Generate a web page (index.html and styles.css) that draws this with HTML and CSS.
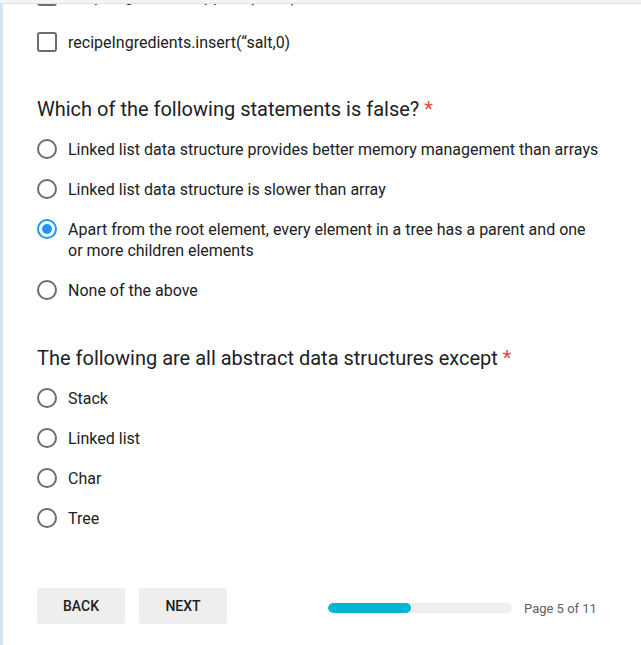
FILE: index.html
```html
<!DOCTYPE html>
<html lang="en">
<head>
<meta charset="utf-8">
<title>Quiz</title>
<link rel="stylesheet" href="styles.css">
</head>
<body>
<div class="topbar"></div>
<div class="frame">
  <div class="strip"></div>
  <main class="content">
    <section class="question">
      <ul class="options options--check">
        <li class="opt opt--clipped"><span class="checkbox"></span><span class="label">recipeIngredients.append(“salt”)</span></li>
        <li class="opt"><span class="checkbox"></span><span class="label">recipeIngredients.insert(“salt,0)</span></li>
      </ul>
    </section>

    <section class="question question--q2">
      <h2 class="title">Which of the following statements is false? <span class="req">*</span></h2>
      <ul class="options">
        <li class="opt"><span class="radio"></span><span class="label">Linked list data structure provides better memory management than arrays</span></li>
        <li class="opt"><span class="radio"></span><span class="label">Linked list data structure is slower than array</span></li>
        <li class="opt"><span class="radio radio--on"></span><span class="label">Apart from the root element, every element in a tree has a parent and one or more children elements</span></li>
        <li class="opt"><span class="radio"></span><span class="label">None of the above</span></li>
      </ul>
    </section>

    <section class="question question--q3">
      <h2 class="title">The following are all abstract data structures except <span class="req">*</span></h2>
      <ul class="options">
        <li class="opt"><span class="radio"></span><span class="label">Stack</span></li>
        <li class="opt"><span class="radio"></span><span class="label">Linked list</span></li>
        <li class="opt"><span class="radio"></span><span class="label">Char</span></li>
        <li class="opt"><span class="radio"></span><span class="label">Tree</span></li>
      </ul>
    </section>

    <footer class="footer">
      <button class="btn">BACK</button>
      <button class="btn">NEXT</button>
      <div class="progress">
        <div class="track"><div class="fill" style="width:45%"></div></div>
        <span class="pageinfo">Page 5 of 11</span>
      </div>
    </footer>
  </main>
</div>
</body>
</html>
```

FILE: styles.css
```css
* { box-sizing: border-box; }
html, body {
  margin: 0;
  padding: 0;
  background: #ffffff;
  font-family: Roboto, "Liberation Sans", Arial, sans-serif;
  color: #212121;
}
body {
  height: 645px;
  overflow: hidden;
  display: flex;
  flex-direction: column;
}
.topbar {
  height: 4px;
  background: #f4f4f4;
  border-bottom: 1px solid #e2e2e2;
  flex: none;
  position: relative;
  z-index: 2;
}
.frame {
  flex: 1;
  display: flex;
  overflow: hidden;
}
.strip {
  width: 3px;
  flex: none;
  background: #d3e5f0;
}
.content {
  flex: 1;
  padding-left: 34px;
  overflow: hidden;
}
.question { margin: 0; }
.question--q2 { margin-top: 33px; }
.question--q3 { margin-top: 34px; }
.title {
  margin: 0 0 6px 0;
  font-size: 20px;
  font-weight: 400;
  line-height: 28px;
  color: #202124;
}
.req { color: #e0483e; }
.options {
  list-style: none;
  margin: 0;
  padding: 0;
}
.options--check {
  display: flex;
  flex-direction: column;
  gap: 6px;
  margin-top: -28px;
}
.opt {
  display: flex;
  align-items: flex-start;
  gap: 11px;
  padding: 10px 40px 9px 0;
  font-size: 16px;
  line-height: 21px;
}
.label { color: #202124; }
.radio {
  flex: none;
  width: 20px;
  height: 20px;
  border: 2px solid #6d6d6d;
  border-radius: 50%;
  display: flex;
  align-items: center;
  justify-content: center;
}
.radio--on { border-color: #1e96f0; }
.radio--on::after {
  content: "";
  width: 10px;
  height: 10px;
  border-radius: 50%;
  background: #1e96f0;
}
.checkbox {
  flex: none;
  width: 20px;
  height: 20px;
  border: 2px solid #6d6d6d;
  border-radius: 3px;
}
.footer {
  margin-top: 50px;
  display: flex;
  align-items: center;
  gap: 14px;
}
.btn {
  width: 88px;
  height: 36px;
  border: none;
  border-radius: 3px;
  background: #eeeeee;
  font-family: Roboto, "Liberation Sans", Arial, sans-serif;
  font-size: 14px;
  font-weight: 500;
  color: #212121;
  padding: 0;
}
.progress {
  margin-left: 87px;
  padding-top: 4px;
  display: flex;
  align-items: center;
  gap: 12px;
}
.track {
  width: 184px;
  height: 10px;
  border-radius: 5px;
  background: #eeeeee;
  overflow: hidden;
}
.fill {
  height: 100%;
  border-radius: 5px;
  background: #00b6d3;
}
.pageinfo {
  font-size: 13px;
  color: #616161;
}
```
